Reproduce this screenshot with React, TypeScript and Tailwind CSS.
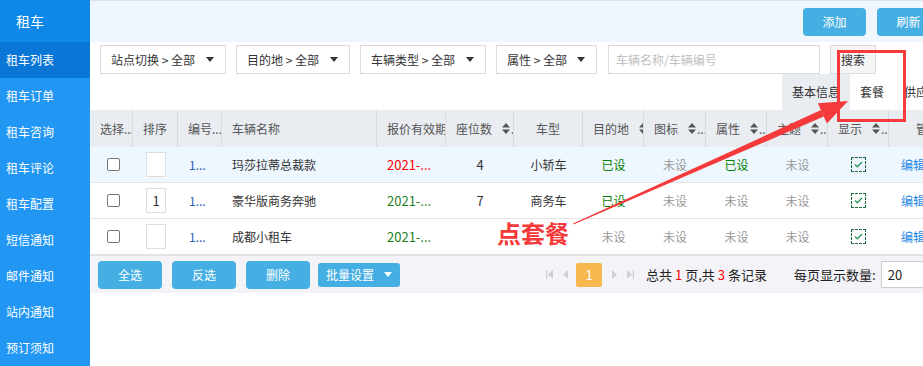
import React from "react";

const menu = ["租车订单", "租车咨询", "租车评论", "租车配置", "短信通知", "邮件通知", "站内通知", "预订须知"];

function Caret() {
	return (
		<svg width="8" height="5" viewBox="0 0 8 5" className="shrink-0">
			<path d="M0 0h8L4 5z" fill="#333" />
		</svg>
	);
}

function SortIcon() {
	return (
		<span className="ml-[10px] flex shrink-0 items-center text-[#555]">
			<svg width="8" height="11" viewBox="0 0 8 11">
				<path d="M4 0l4 4.5H0z M0 6.5h8L4 11z" fill="#555" />
			</svg>
			<span className="ml-[1px]">...</span>
		</span>
	);
}

function Dropdown({ label, w }: { label: string; w: string }) {
	return (
		<div
			className={`flex h-[29px] ${w} shrink-0 items-center justify-between border border-[#dcdcdc] bg-white pl-[10px]
				pr-[11px] text-[12px] text-[#333]`}
		>
			<span>{label}</span>
			<Caret />
		</div>
	);
}

function HeadCell({
	label,
	w,
	sort,
	center,
	last,
}: {
	label: string;
	w: string;
	sort?: boolean;
	center?: boolean;
	last?: boolean;
}) {
	return (
		<div
			className={`flex h-full ${w} shrink-0 items-center overflow-hidden whitespace-nowrap ${
				last ? "" : "border-r border-[#d8dce2]"
			} ${center ? "justify-center" : "pl-[10px]"}`}
		>
			<span>{label}</span>
			{sort && <SortIcon />}
		</div>
	);
}

function ShowIcon() {
	return (
		<div className="flex size-[15px] items-center justify-center border border-dashed border-[#1f6b3d]">
			<svg width="9" height="7" viewBox="0 0 9 7">
				<path d="M1 3.5l2.4 2.3L8 1" fill="none" stroke="#2e9e5e" strokeWidth="1.4" />
			</svg>
		</div>
	);
}

type Row = {
	sort: string;
	name: string;
	dateRed: boolean;
	seats: string;
	type: string;
	flags: [boolean, boolean, boolean, boolean];
	bg: string;
};

const rows: Row[] = [
	{ sort: "", name: "玛莎拉蒂总裁款", dateRed: true, seats: "4", type: "小轿车", flags: [true, false, true, false], bg: "bg-[#eef6fe]" },
	{ sort: "1", name: "豪华版商务奔驰", dateRed: false, seats: "7", type: "商务车", flags: [true, false, false, false], bg: "bg-white" },
	{ sort: "", name: "成都小租车", dateRed: false, seats: "", type: "", flags: [false, false, false, false], bg: "bg-white" },
];

function Flag({ on }: { on: boolean }) {
	return on ? <span className="text-[#008000]">已设</span> : <span className="text-[#999]">未设</span>;
}

function BlueButton({ children, w }: { children: React.ReactNode; w: string }) {
	return (
		<button className={`flex h-[28px] ${w} items-center justify-center rounded-[4px] bg-[#45aee2] text-[12px] text-white`}>
			{children}
		</button>
	);
}

export default function App() {
	return (
		<div
			className="relative flex h-[366px] w-[923px] overflow-hidden bg-white font-['Noto_Sans_CJK_SC','Microsoft_YaHei',sans-serif]
				text-[12px] leading-none"
		>
			<aside className="flex w-[90px] shrink-0 flex-col bg-[#2196f3] text-white">
				<div className="flex h-[42px] items-center bg-[#0d88e9] pl-[16px] text-[14px]">租车</div>
				<div className="flex h-[36px] items-center bg-[#0a76d6] pl-[6px] text-[12px]">租车列表</div>
				{menu.map((m) => (
					<div key={m} className="flex h-[36px] items-center pl-[6px] text-[12px]">
						{m}
					</div>
				))}
			</aside>

			<main className="flex w-[860px] shrink-0 flex-col">
				<div className="flex h-[42px] items-center justify-end gap-[11px] border-t border-[#dfe3e8] bg-[#eff6fd] pr-[10px]">
					<BlueButton w="w-[63px]">添加</BlueButton>
					<BlueButton w="w-[63px]">刷新</BlueButton>
				</div>

				<div className="flex items-center gap-[10px] pt-[3px] pl-[10px]">
					<Dropdown label="站点切换 > 全部" w="w-[126px]" />
					<Dropdown label="目的地 > 全部" w="w-[114px]" />
					<Dropdown label="车辆类型 > 全部" w="w-[126px]" />
					<Dropdown label="属性 > 全部" w="w-[101px]" />
					<div className="ml-[1px] flex h-[29px] w-[212px] items-center border border-[#dcdcdc] pl-[7px] text-[#c0c0c0]">
						车辆名称/车辆编号
					</div>
					<div className="flex h-[29px] w-[46px] items-center justify-center border border-[#dcdcdc] bg-[#f5f5f5] text-[#333]">
						搜索
					</div>
				</div>

				<div className="flex h-[36px] justify-end text-[#333]">
					<div className="flex w-[68px] items-center bg-[#e9ecf1] pl-[10px]">基本信息</div>
					<div className="flex w-[44px] items-center pl-[10px]">套餐</div>
					<div className="flex w-[56px] items-center pl-[10px]">供应商</div>
				</div>

				<div className="flex h-[37px] items-center bg-[#e9ecf1] text-[#555]">
					<HeadCell label="选择..." w="w-[43px]" />
					<HeadCell label="排序" w="w-[45px]" />
					<HeadCell label="编号..." w="w-[44px]" />
					<HeadCell label="车辆名称" w="w-[155px]" />
					<HeadCell label="报价有效期" w="w-[69px]" />
					<HeadCell label="座位数" w="w-[68px]" sort />
					<HeadCell label="车型" w="w-[69px]" center />
					<HeadCell label="目的地" w="w-[61px]" sort />
					<HeadCell label="图标" w="w-[62px]" sort />
					<HeadCell label="属性" w="w-[61px]" sort />
					<HeadCell label="主题" w="w-[61px]" sort />
					<HeadCell label="显示" w="w-[61px]" sort />
					<HeadCell label="管理" w="w-[78px]" center last />
				</div>

				{rows.map((r, i) => (
					<div key={i} className={`flex h-[36px] items-center border-b border-[#e4e4e4] ${r.bg} text-[#333]`}>
						<div className="flex w-[43px] shrink-0 justify-center pl-[3px]">
							<span className="size-[13px] rounded-[2px] border border-[#767676] bg-white" />
						</div>
						<div className="flex w-[45px] shrink-0 justify-center pl-[1px]">
							<div className="flex h-[25px] w-[20px] items-center justify-center border border-[#dedede] bg-white text-[13px]">
								{r.sort}
							</div>
						</div>
						<div className="w-[44px] shrink-0 pl-[11px] text-[#2b62b4]">1...</div>
						<div className="w-[155px] shrink-0 pl-[10px]">{r.name}</div>
						<div className={`w-[69px] shrink-0 pl-[10px] text-[13px] ${r.dateRed ? "text-[#f00]" : "text-[#1a7f1a]"}`}>
							2021-...
						</div>
						<div className="w-[68px] shrink-0 text-center text-[13px]">{r.seats}</div>
						<div className="w-[69px] shrink-0 text-center">{r.type}</div>
						<div className="w-[61px] shrink-0 text-center">
							<Flag on={r.flags[0]} />
						</div>
						<div className="w-[62px] shrink-0 text-center">
							<Flag on={r.flags[1]} />
						</div>
						<div className="w-[61px] shrink-0 text-center">
							<Flag on={r.flags[2]} />
						</div>
						<div className="w-[61px] shrink-0 text-center">
							<Flag on={r.flags[3]} />
						</div>
						<div className="flex w-[61px] shrink-0 justify-center">
							<ShowIcon />
						</div>
						<div className="w-[78px] shrink-0 pl-[12px] text-[#1e88e5]">编辑 套餐</div>
					</div>
				))}

				<div className="flex h-[38px] items-center border-t border-[#e0e0e8] bg-[#f4f4f8] pl-[8px]">
					<div className="flex items-center gap-[10px]">
						<BlueButton w="w-[64px]">全选</BlueButton>
						<BlueButton w="w-[64px]">反选</BlueButton>
						<BlueButton w="w-[64px]">删除</BlueButton>
					</div>
					<button
						className="ml-[8px] flex h-[24px] w-[82px] items-center justify-center gap-[10px] rounded-[3px] bg-[#45aee2]
							text-[12px] text-white"
					>
						批量设置
						<svg width="8" height="5" viewBox="0 0 8 5">
							<path d="M0 0h8L4 5z" fill="#fff" />
						</svg>
					</button>

					<div className="ml-[146px] flex items-center">
						<svg width="7" height="9" viewBox="0 0 7 9">
							<path d="M0 0h1.3v9H0z M7 0v9L2 4.5z" fill="#d0d0d0" />
						</svg>
						<svg width="5" height="9" viewBox="0 0 5 9" className="ml-[10px]">
							<path d="M5 0v9L0 4.5z" fill="#d0d0d0" />
						</svg>
						<div className="ml-[8px] flex h-[24px] w-[26px] items-center justify-center rounded-[2px] bg-[#f7b84f] text-[13px] text-white">
							1
						</div>
						<svg width="5" height="9" viewBox="0 0 5 9" className="ml-[10px]">
							<path d="M0 0v9L5 4.5z" fill="#d0d0d0" />
						</svg>
						<svg width="7" height="9" viewBox="0 0 7 9" className="ml-[10px]">
							<path d="M0 0v9L5 4.5z M5.7 0H7v9H5.7z" fill="#d0d0d0" />
						</svg>
						<span className="ml-[12px] flex items-center text-[13px] text-[#222]">
							总共<span className="mx-[3px] text-[#f00]">1</span>页,共<span className="mx-[3px] text-[#f00]">3</span>条记录
						</span>
						<span className="ml-[27px] text-[13px] text-[#222]">每页显示数量:</span>
						<div className="ml-[5px] flex h-[27px] w-[60px] items-center border border-[#ccc] bg-white pl-[6px] text-[13px] text-[#222]">
							20
						</div>
					</div>
				</div>
			</main>

			{/* annotation overlay */}
			<div className="pointer-events-none absolute top-[50px] left-[837px] h-[72px] w-[69px] border-[3px] border-[#f43a3a]" />
			<svg className="pointer-events-none absolute top-0 left-0" width="923" height="366" viewBox="0 0 923 366">
				<path d="M573 223.5 L821 110.1 L823.8 116.5 L573.4 224.5 Z" fill="#f43a3a" />
				<path d="M848 101 L817.9 103.2 L826.9 123.4 Z" fill="#f43a3a" />
			</svg>
			<div className="pointer-events-none absolute top-[218px] left-[497px] text-[24px] leading-[30px] font-bold text-[#f43a3a]">
				点套餐
			</div>
		</div>
	);
}
